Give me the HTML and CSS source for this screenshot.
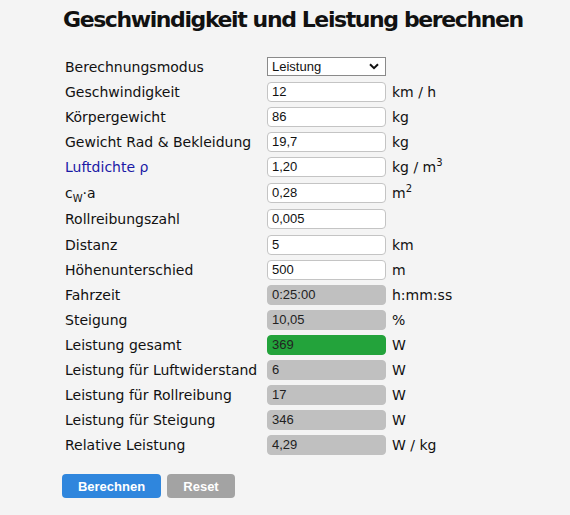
FILE: index.html
```html
<!DOCTYPE html>
<html lang="de">
<head>
<meta charset="utf-8">
<title>Geschwindigkeit und Leistung berechnen</title>
<link rel="stylesheet" href="styles.css">
</head>
<body>
<div class="page">
  <h1 class="title">Geschwindigkeit und Leistung berechnen</h1>
  <div class="form">
    <div class="label">Berechnungsmodus</div>
    <div class="field"><div class="select"><span>Leistung</span><svg class="chev" width="10" height="7" viewBox="0 0 10 7"><path d="M1 1.2 L5 5.2 L9 1.2" fill="none" stroke="#111" stroke-width="2"/></svg></div></div>
    <div class="unit"></div>

    <div class="label">Geschwindigkeit</div>
    <div class="field"><div class="input">12</div></div>
    <div class="unit">km / h</div>

    <div class="label">Körpergewicht</div>
    <div class="field"><div class="input">86</div></div>
    <div class="unit">kg</div>

    <div class="label">Gewicht Rad &amp; Bekleidung</div>
    <div class="field"><div class="input">19,7</div></div>
    <div class="unit">kg</div>

    <div class="label link">Luftdichte ρ</div>
    <div class="field"><div class="input">1,20</div></div>
    <div class="unit tall">kg / m<sup>3</sup></div>

    <div class="label tall">c<sub>W</sub>·a</div>
    <div class="field"><div class="input">0,28</div></div>
    <div class="unit tall">m<sup>2</sup></div>

    <div class="label">Rollreibungszahl</div>
    <div class="field"><div class="input">0,005</div></div>
    <div class="unit"></div>

    <div class="label">Distanz</div>
    <div class="field"><div class="input">5</div></div>
    <div class="unit">km</div>

    <div class="label">Höhenunterschied</div>
    <div class="field"><div class="input">500</div></div>
    <div class="unit">m</div>

    <div class="label">Fahrzeit</div>
    <div class="field"><div class="input out">0:25:00</div></div>
    <div class="unit">h:mm:ss</div>

    <div class="label">Steigung</div>
    <div class="field"><div class="input out">10,05</div></div>
    <div class="unit">%</div>

    <div class="label">Leistung gesamt</div>
    <div class="field"><div class="input out green">369</div></div>
    <div class="unit">W</div>

    <div class="label">Leistung für Luftwiderstand</div>
    <div class="field"><div class="input out">6</div></div>
    <div class="unit">W</div>

    <div class="label">Leistung für Rollreibung</div>
    <div class="field"><div class="input out">17</div></div>
    <div class="unit">W</div>

    <div class="label">Leistung für Steigung</div>
    <div class="field"><div class="input out">346</div></div>
    <div class="unit">W</div>

    <div class="label">Relative Leistung</div>
    <div class="field"><div class="input out">4,29</div></div>
    <div class="unit">W / kg</div>
  </div>
  <div class="buttons">
    <button class="btn primary">Berechnen</button>
    <button class="btn secondary">Reset</button>
  </div>
</div>
</body>
</html>
```
FILE: styles.css
```css
html, body {
  margin: 0;
  padding: 0;
  background: #f4f4f4;
}
body {
  font-family: "DejaVu Sans", Verdana, sans-serif;
  color: #111;
}
.page {
  padding: 6px 0 0 62px;
}
.title {
  margin: 0 0 0 1px;
  font-size: 22px;
  line-height: 28px;
  font-weight: bold;
  letter-spacing: -1.4px;
  white-space: nowrap;
  color: #111;
}
.form {
  margin-top: 20px;
  display: grid;
  grid-template-columns: 205px 119px auto;
  grid-template-rows: repeat(4, 25px) repeat(3, 26px) repeat(9, 25px);
  align-items: center;
}
.label {
  padding-left: 3px;
  font-size: 14px;
  white-space: nowrap;
}
.label.link { color: #1a1aa6; }
.unit {
  padding-left: 6px;
  font-size: 14px;
  white-space: nowrap;
}
.unit sup, .label sub {
  font-size: 10px;
  line-height: 0;
}
.field { display: flex; align-items: center; }
.input {
  box-sizing: border-box;
  width: 119px;
  height: 20px;
  border: 1px solid #c4c4c4;
  border-radius: 4px;
  background: #fff;
  font-family: "Liberation Sans", Arial, sans-serif;
  font-size: 13px;
  line-height: 18px;
  padding-left: 4px;
  color: #111;
}
.input.out {
  background: #c0c0c0;
  border-color: #c0c0c0;
  color: #222;
}
.input.green {
  background: #23a33b;
  border-color: #23a33b;
}
.select {
  box-sizing: border-box;
  width: 119px;
  height: 19px;
  border: 1px solid #8a8a8a;
  background: #fff;
  font-family: "Liberation Sans", Arial, sans-serif;
  font-size: 13px;
  line-height: 17px;
  padding: 0 6px 0 4px;
  display: flex;
  justify-content: space-between;
  align-items: center;
}
.buttons {
  margin-top: 17px;
  display: flex;
  gap: 6px;
}
.btn {
  height: 24px;
  border: none;
  border-radius: 4px;
  color: #fff;
  font-family: "Liberation Sans", Arial, sans-serif;
  font-weight: bold;
  font-size: 13px;
  padding: 0;
}
.primary { background: #2f86dd; width: 99px; }
.secondary { background: #a3a3a3; width: 68px; }
```
